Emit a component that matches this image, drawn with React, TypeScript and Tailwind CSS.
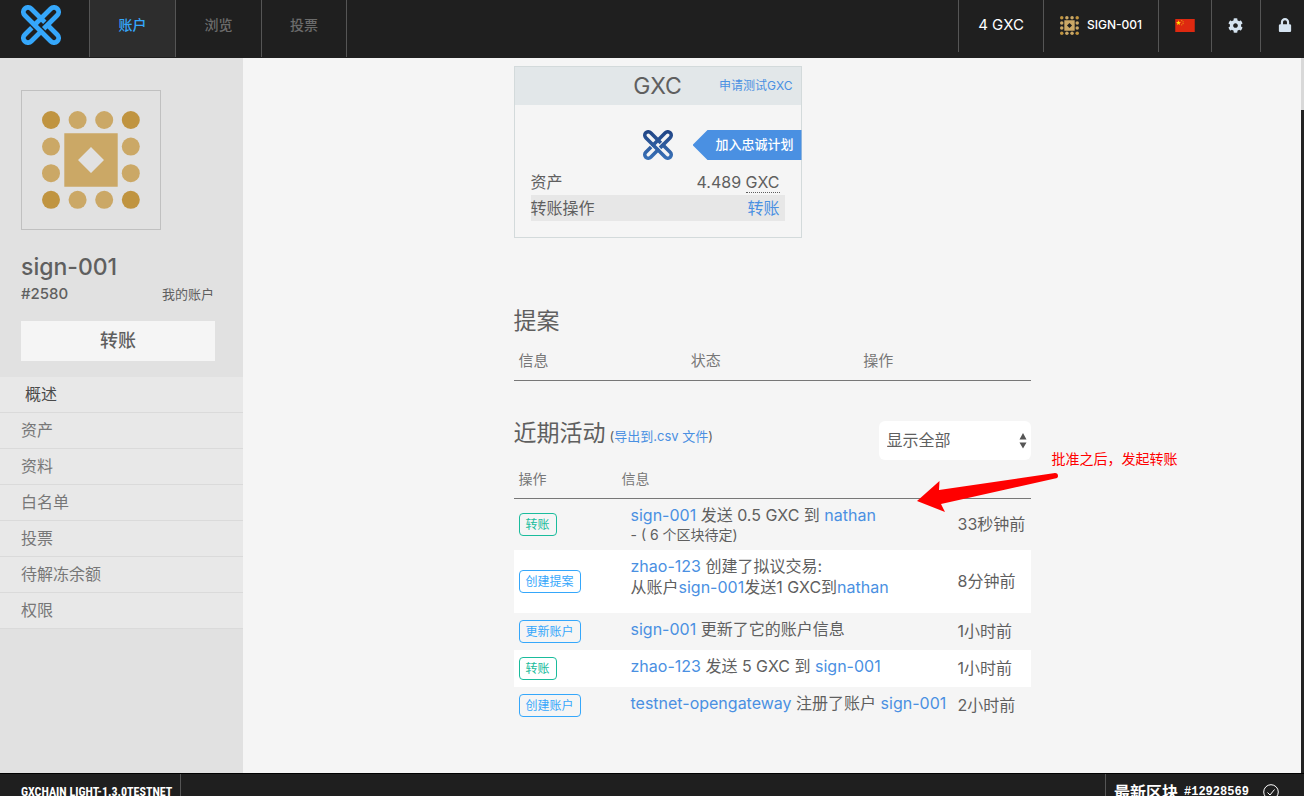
import React from "react";
import { FaCog, FaLock } from "react-icons/fa";

function Logo({ className, gradient }: { className: string; gradient?: boolean }) {
  return (
    <svg viewBox="-20 -20 40 40" className={className} role="img" aria-label="GXChain">
      <defs>
        <linearGradient id="navy" gradientUnits="userSpaceOnUse" x1="-20" y1="-20" x2="20" y2="20">
          <stop offset="0" stopColor="#1b3a78" />
          <stop offset="1" stopColor="#3f7cc4" />
        </linearGradient>
      </defs>
      <g transform="rotate(45)" fill="none" stroke={gradient ? "url(#navy)" : "#35a7fb"} strokeWidth="4.8">
        <path d="M2.4 -4.6H18.4A4.6 4.6 0 0 1 18.4 4.6H-18.4A4.6 4.6 0 0 1 -18.4 -4.6H0.8" />
        <path d="M4.6 0.8V-18.4A4.6 4.6 0 0 0 -4.6 -18.4V6.8M-4.6 8.4V18.4A4.6 4.6 0 0 0 4.6 18.4V2.4" />
      </g>
    </svg>
  );
}

function Identicon({ className }: { className: string }) {
  const steps = [0, 1, 2, 3];
  return (
    <svg viewBox="0 0 98 98" className={className} aria-hidden="true">
      {steps.flatMap((row) =>
        steps.map((col) => {
          const edgeRow = row === 0 || row === 3;
          const edgeCol = col === 0 || col === 3;
          if (!edgeRow && !edgeCol) return null;
          return (
            <circle
              key={`${row}-${col}`}
              cx={9 + col * 26.6}
              cy={9 + row * 26.6}
              r="9"
              fill={edgeRow && edgeCol ? "#c09440" : "#cba866"}
            />
          );
        })
      )}
      <path fillRule="evenodd" fill="#cba866" d="M22.3 22.3H75.7V75.7H22.3ZM49 36L36 49L49 62L62 49Z" />
    </svg>
  );
}

function Flag() {
  return (
    <svg viewBox="0 0 30 20" className="h-[13px] w-5" role="img" aria-label="中文">
      <path fill="#de2910" d="M0 0H30V20H0Z" />
      <path fill="#ffde00" d="M5 2L6 4.7H8.9L6.6 6.4L7.4 9.2L5 7.5L2.6 9.2L3.4 6.4L1.1 4.7H4Z" />
      <g fill="#f0a010">
        <circle cx="10" cy="2.4" r="0.9" />
        <circle cx="12" cy="4.4" r="0.9" />
        <circle cx="12" cy="7" r="0.9" />
        <circle cx="10" cy="9" r="0.9" />
      </g>
    </svg>
  );
}

const link = "text-[#4a90e2]";

const tabs = [
  { label: "账户", active: true },
  { label: "浏览", active: false },
  { label: "投票", active: false },
];

const menu = ["概述", "资产", "资料", "白名单", "投票", "待解冻余额", "权限"];

function A({ children }: { children: React.ReactNode }) {
  return (
    <a href="#" className={link}>
      {children}
    </a>
  );
}

const activity = [
  {
    tag: "转账",
    green: true,
    time: "33秒钟前",
    height: "h-[51px]",
    info: (
      <>
        <div><A>sign-001</A> 发送 0.5 GXC 到 <A>nathan</A></div>
        <div className="text-sm leading-[18px]">- ( 6 个区块待定)</div>
      </>
    ),
  },
  {
    tag: "创建提案",
    green: false,
    time: "8分钟前",
    height: "h-[63px]",
    info: (
      <>
        <div><A>zhao-123</A> 创建了拟议交易:</div>
        <div>从账户<A>sign-001</A>发送1 GXC到<A>nathan</A></div>
      </>
    ),
  },
  {
    tag: "更新账户",
    green: false,
    time: "1小时前",
    height: "h-[37px]",
    info: <div><A>sign-001</A> 更新了它的账户信息</div>,
  },
  {
    tag: "转账",
    green: true,
    time: "1小时前",
    height: "h-[37px]",
    info: <div><A>zhao-123</A> 发送 5 GXC 到 <A>sign-001</A></div>,
  },
  {
    tag: "创建账户",
    green: false,
    time: "2小时前",
    height: "h-[37px]",
    info: <div><A>testnet-opengateway</A> 注册了账户 <A>sign-001</A></div>,
  },
];

function Header() {
  return (
    <header className="flex h-[58px] shrink-0 items-start justify-between bg-[#1f1f1f] text-sm">
      <nav className="flex h-[57px]">
        <a href="#" className="w-[89px] pt-[5px] pl-[21px]">
          <Logo className="size-10" />
        </a>
        {tabs.map((tab) => (
          <a
            key={tab.label}
            href="#"
            className={
              tab.active
                ? "flex w-[86px] justify-center border-l border-[#555] bg-[#2d2d2d] pt-[15px] font-medium text-[#35a7fb]"
                : "flex w-[86px] justify-center border-l border-[#555] pt-[15px] font-medium text-[#6b6b6b] last:border-r"
            }
          >
            {tab.label}
          </a>
        ))}
      </nav>
      <div className="flex h-[52px] text-white">
        <div className="flex w-[85px] items-center justify-center border-l border-[#555] pb-0.5 text-[15px]">4 GXC</div>
        <a href="#" className="flex w-[115px] items-center gap-2 border-l border-[#555] pb-0.5 pl-4 text-xs font-medium">
          <Identicon className="size-[19px]" />
          SIGN-001
        </a>
        <button aria-label="语言" className="flex w-[53px] items-center justify-center border-l border-[#555] pb-0.5">
          <Flag />
        </button>
        <button aria-label="设置" className="flex w-[49px] items-center justify-center border-l border-[#555] pr-0.5 pb-0.5 text-[#d5e3f0]">
          <FaCog className="size-[15px]" />
        </button>
        <button aria-label="锁定" className="flex w-11 items-center justify-center border-l border-[#555] pb-0.5 pl-1 text-[#d5e3f0]">
          <FaLock className="size-[14px]" />
        </button>
      </div>
    </header>
  );
}

function Sidebar() {
  return (
    <aside className="w-[243px] shrink-0 bg-[#e1e1e1] pt-8">
      <div className="px-[21px]">
        <div className="flex size-[140px] items-center justify-center border border-[#c0c0c0]">
          <Identicon className="size-[98px]" />
        </div>
        <h1 className="mt-[22px] text-[23px] leading-[30px] font-medium">sign-001</h1>
        <div className="flex items-center justify-between pr-2 leading-6">
          <span className="text-[15px] font-medium">#2580</span>
          <span className="text-[13px]">我的账户</span>
        </div>
        <button className="mt-[15px] block h-10 w-[194px] bg-[#f5f5f5] text-lg font-medium">转账</button>
      </div>
      <ul className="mt-4 bg-[#e8e8e8]">
        {menu.map((item, i) => (
          <li key={item} className="border-b border-[#dadada]">
            <a
              href="#"
              className={
                i === 0
                  ? "block pl-[25px] leading-[35px] text-[#4a4a4a]"
                  : "block pl-[21px] leading-[35px] text-[#777]"
              }
            >
              {item}
            </a>
          </li>
        ))}
      </ul>
    </aside>
  );
}

function AssetCard() {
  return (
    <section className="h-[172px] w-72 border border-[#d3dadb]">
      <div className="relative flex h-[38px] items-center justify-center bg-[#e2e7e9]">
        <h2 className="text-[23px]">GXC</h2>
        <a href="#" className="absolute right-2 text-xs text-[#4a90e2]">申请测试GXC</a>
      </div>
      <div className="relative mt-[25px] flex justify-center">
        <Logo gradient className="size-[30px]" />
        <a href="#" className="absolute top-0 -right-px h-[30px] w-[109px] bg-[#4a90e2] pl-[23px] text-[13px] leading-[29px] font-medium text-white [clip-path:polygon(0_50%,15px_0,100%_0,100%_100%,15px_100%)]">
          加入忠诚计划
        </a>
      </div>
      <dl className="mt-[9px] px-4 leading-[26px]">
        <div className="flex justify-between pr-[5px]">
          <dt>资产</dt>
          <dd>
            4.489 <span className="border-b border-dotted border-[#5f5f5f]">GXC</span>
          </dd>
        </div>
        <div className="flex justify-between bg-[#e7e7e7] pr-[5px]">
          <dt>转账操作</dt>
          <dd><A>转账</A></dd>
        </div>
      </dl>
    </section>
  );
}

function Annotation() {
  return (
    <div className="pointer-events-none absolute top-[26px] left-[402px] w-[280px] text-sm text-[#f00]">
      <p className="pl-[136px] leading-6">批准之后，发起转账</p>
      <svg viewBox="0 0 144 40" className="mt-px h-10 w-36" aria-hidden="true">
        <path fill="#f00" d="M1 29L23.500 9L23 18L139 1Q142 1 142 4Q142 6 139 6.500L25 32L29 40Z" />
      </svg>
    </div>
  );
}

export default function App() {
  return (
    <div className="flex h-screen flex-col overflow-hidden bg-[#f5f5f5] font-['Inter','Noto_Sans_CJK_SC',sans-serif] text-base text-[#5f5f5f]">
      <Header />
      <div className="flex min-h-0 flex-1">
        <Sidebar />
        <main className="min-w-0 flex-1 pt-2">
          <div className="mx-auto w-full max-w-[517px]">
            <AssetCard />

            <section className="mt-[68px]">
              <h2 className="text-[23px] leading-[30px]">提案</h2>
              <table className="mt-1 w-full table-fixed border-b border-[#777] text-left text-[15px] text-[#777]">
                <thead>
                  <tr className="h-10">
                    <th className="px-[5px] pt-0.5 font-normal">信息</th>
                    <th className="px-[5px] pt-0.5 font-normal">状态</th>
                    <th className="px-[5px] pt-0.5 font-normal">操作</th>
                  </tr>
                </thead>
              </table>
            </section>

            <section className="relative mt-10">
              <div className="flex h-[39px] items-start justify-between">
                <div className="flex items-baseline gap-1">
                  <h2 className="text-[23px] leading-6">近期活动</h2>
                  <span className="text-[13px]">(<A>导出到.csv 文件</A>)</span>
                </div>
                <div className="relative">
                  <select aria-label="筛选" className="block h-[39px] w-[152px] appearance-none rounded-md bg-white pl-2">
                    <option>显示全部</option>
                  </select>
                  <svg viewBox="0 0 8 16" className="pointer-events-none absolute top-3 right-1 h-4 w-2 fill-[#555]" aria-hidden="true">
                    <path d="M4 0L7.500 6.500H0.500ZM4 15.500L0.500 9.500H7.500Z" />
                  </svg>
                </div>
              </div>
              <table className="w-full table-fixed text-left">
                <colgroup>
                  <col className="w-[103px]" />
                  <col />
                  <col className="w-[78px]" />
                </colgroup>
                <thead>
                  <tr className="h-[39px] border-b border-[#777] text-sm text-[#777]">
                    <th className="px-[5px] font-normal">操作</th>
                    <th className="px-[5px] font-normal">信息</th>
                    <th aria-label="时间" />
                  </tr>
                </thead>
                <tbody>
                  {activity.map((row, i) => (
                    <tr key={i} className="even:bg-white">
                      <td className="pb-0.5 pl-[5px]">
                        <span
                          className={
                            row.green
                              ? "inline-block h-[23px] rounded border border-[#1abc9c] px-1.5 align-middle text-xs leading-[22px] text-[#1abc9c]"
                              : "inline-block h-[23px] rounded border border-[#35a7fb] px-1.5 align-middle text-xs leading-[22px] text-[#35a7fb]"
                          }
                        >
                          {row.tag}
                        </span>
                      </td>
                      <td className="pl-[14px] align-top">
                        <div className={`${row.height} pt-[6px] leading-[21px] whitespace-nowrap`}>{row.info}</div>
                      </td>
                      <td className="pb-0.5 pl-[5px] whitespace-nowrap">{row.time}</td>
                    </tr>
                  ))}
                </tbody>
              </table>
              <Annotation />
            </section>
          </div>
        </main>
        <div className="w-[3px] shrink-0 bg-[#222]">
          <div className="h-[52px] bg-[#d8d8d8]" />
        </div>
      </div>
      <footer className="flex h-[23px] shrink-0 items-start justify-between overflow-hidden border-t border-black bg-[#1f1f1f] font-bold text-white">
        <div className="h-9 w-[181px] border-r border-[#555] pl-[21px] font-['Roboto_Condensed','Roboto',sans-serif] text-xs leading-9 whitespace-nowrap">
          GXCHAIN LIGHT-1.3.0TESTNET
        </div>
        <div className="flex h-9 w-[199px] items-center gap-1.5 border-l border-[#555] pl-2">
          <span>最新区块</span>
          <span className="font-['Liberation_Mono',monospace] text-xs">#12928569</span>
          <svg viewBox="0 0 16 16" className="ml-2 size-4 fill-none stroke-white" aria-hidden="true">
            <circle cx="8" cy="8" r="7.300" />
            <path d="M4.500 8.500L7 11L11.500 5.500" />
          </svg>
        </div>
      </footer>
    </div>
  );
}
